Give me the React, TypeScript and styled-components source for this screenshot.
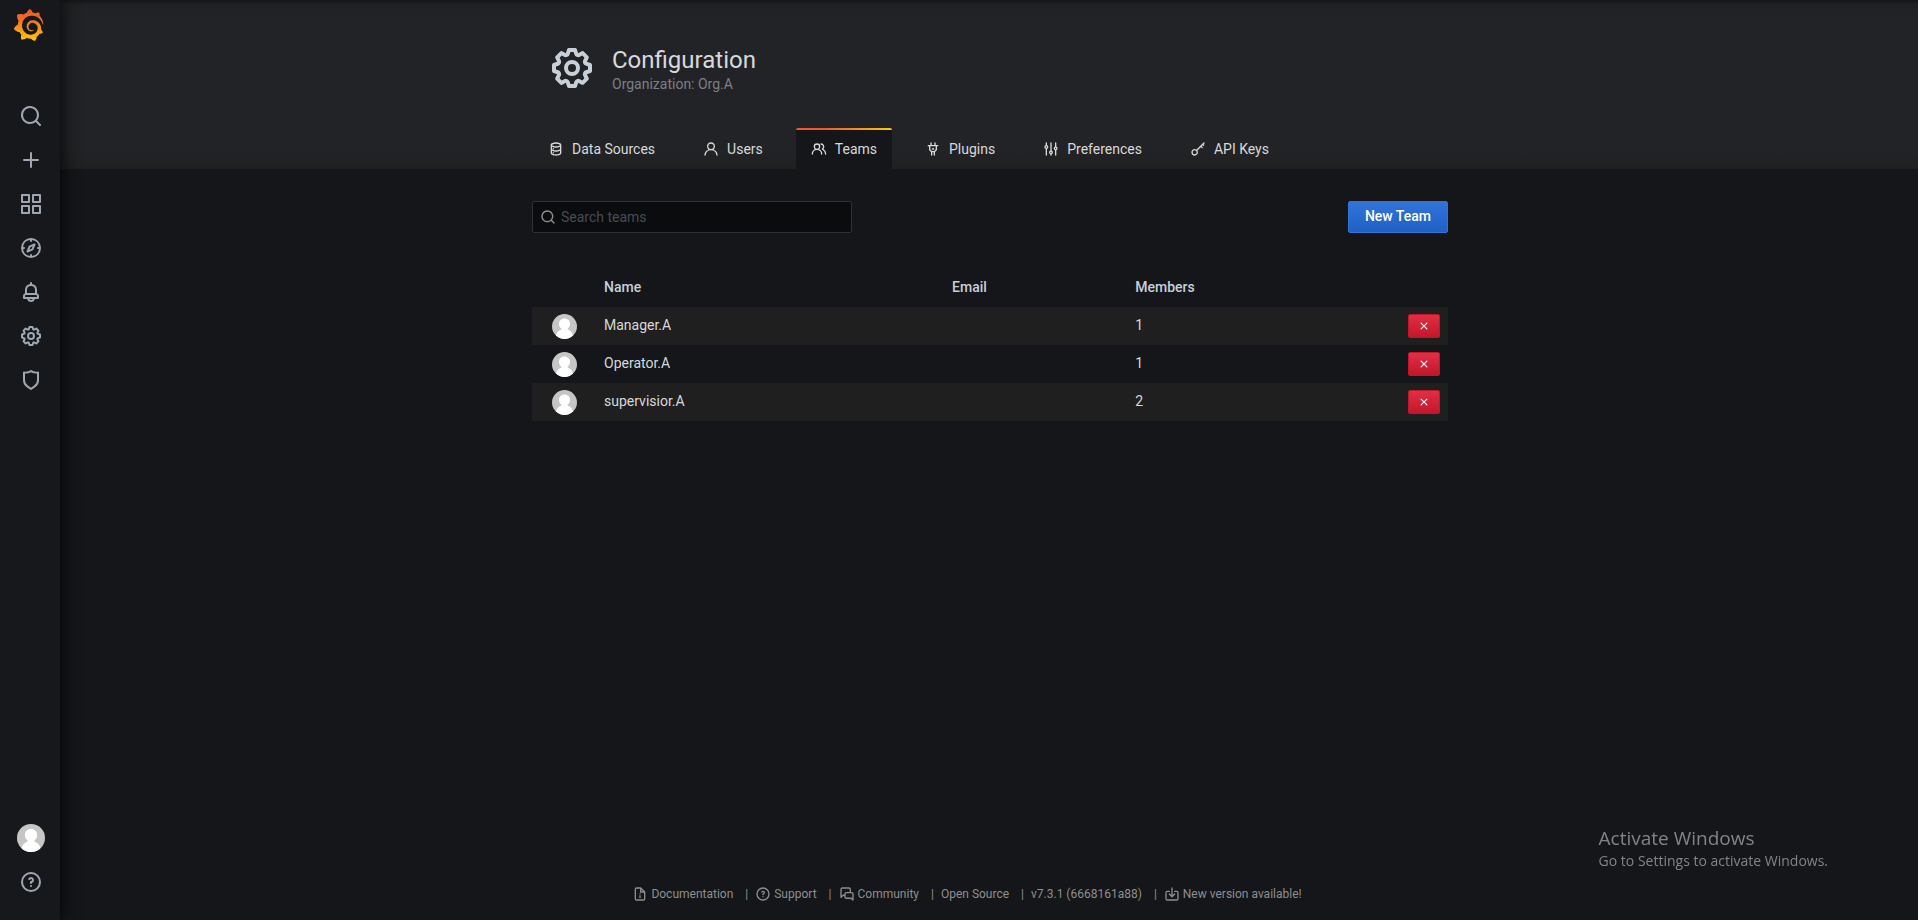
import React from 'react';
import styled, { createGlobalStyle } from 'styled-components';

const GlobalStyle = createGlobalStyle`
  *, *::before, *::after { box-sizing: border-box; }
  html, body { margin: 0; padding: 0; background: #141619; }
  body {
    color: #d8d9da;
    font-family: Roboto, "Liberation Sans", sans-serif;
    font-size: 14px;
    line-height: 20px;
  }
  a { color: inherit; text-decoration: none; }
`;

const ICONS = {
  search:
    'M21.71,20.29,18,16.61A9,9,0,1,0,16.61,18l3.68,3.68a1,1,0,0,0,1.42,0A1,1,0,0,0,21.71,20.29ZM11,18a7,7,0,1,1,7-7A7,7,0,0,1,11,18Z',
  plus: 'M19,11H13V5a1,1,0,0,0-2,0v6H5a1,1,0,0,0,0,2h6v6a1,1,0,0,0,2,0V13h6a1,1,0,0,0,0-2Z',
  apps: 'M10,13H3a1,1,0,0,0-1,1v7a1,1,0,0,0,1,1h7a1,1,0,0,0,1-1V14A1,1,0,0,0,10,13ZM9,20H4V15H9ZM21,2H14a1,1,0,0,0-1,1v7a1,1,0,0,0,1,1h7a1,1,0,0,0,1-1V3A1,1,0,0,0,21,2ZM20,9H15V4h5Zm1,4H14a1,1,0,0,0-1,1v7a1,1,0,0,0,1,1h7a1,1,0,0,0,1-1V14A1,1,0,0,0,21,13Zm-1,7H15V15h5ZM10,2H3A1,1,0,0,0,2,3v7a1,1,0,0,0,1,1h7a1,1,0,0,0,1-1V3A1,1,0,0,0,10,2ZM9,9H4V4H9Z',
  compass:
    'M12,2A10,10,0,1,0,22,12,10,10,0,0,0,12,2Zm1,17.93V19a1,1,0,0,0-2,0v.93A8,8,0,0,1,4.07,13H5a1,1,0,0,0,0-2H4.07A8,8,0,0,1,11,4.07V5a1,1,0,0,0,2,0V4.07A8,8,0,0,1,19.93,11H19a1,1,0,0,0,0,2h.93A8,8,0,0,1,13,19.93ZM15.14,7.55l-5,2.12a1,1,0,0,0-.52.52l-2.12,5a1,1,0,0,0,.21,1.1,1,1,0,0,0,.7.29.93.93,0,0,0,.4-.09l5-2.12a1,1,0,0,0,.52-.52l2.12-5a1,1,0,0,0-1.31-1.31Zm-2.49,5.1-2.28,1,1-2.28,2.28-1Z',
  bell: 'M18,13.18V10a6,6,0,0,0-5-5.91V3a1,1,0,0,0-2,0V4.09A6,6,0,0,0,6,10v3.18A3,3,0,0,0,4,16v2a1,1,0,0,0,1,1H8.14a4,4,0,0,0,7.72,0H19a1,1,0,0,0,1-1V16A3,3,0,0,0,18,13.18ZM8,10a4,4,0,0,1,8,0v3H8Zm4,10a2,2,0,0,1-1.72-1h3.44A2,2,0,0,1,12,20Zm6-3H6V16a1,1,0,0,1,1-1H17a1,1,0,0,1,1,1Z',
  cog: 'M21.32,9.55l-1.89-.63.89-1.78A1,1,0,0,0,20.13,6L18,3.87a1,1,0,0,0-1.15-.19l-1.78.89-.63-1.89A1,1,0,0,0,13.5,2h-3a1,1,0,0,0-.95.68L8.92,4.57,7.14,3.68A1,1,0,0,0,6,3.87L3.87,6a1,1,0,0,0-.19,1.15l.89,1.78-1.89.63A1,1,0,0,0,2,10.5v3a1,1,0,0,0,.68.95l1.89.63-.89,1.78A1,1,0,0,0,3.87,18L6,20.13a1,1,0,0,0,1.15.19l1.78-.89.63,1.89a1,1,0,0,0,.95.68h3a1,1,0,0,0,.95-.68l.63-1.89,1.78.89A1,1,0,0,0,18,20.13L20.13,18a1,1,0,0,0,.19-1.15l-.89-1.78,1.89-.63A1,1,0,0,0,22,13.5v-3A1,1,0,0,0,21.32,9.55ZM20,12.78l-1.2.4A2,2,0,0,0,17.64,16l.57,1.14-1.1,1.1L16,17.64a2,2,0,0,0-2.79,1.16l-.4,1.2H11.22l-.4-1.2A2,2,0,0,0,8,17.64l-1.14.57-1.1-1.1L6.36,16A2,2,0,0,0,5.2,13.18L4,12.78V11.22l1.2-.4A2,2,0,0,0,6.36,8L5.79,6.89l1.1-1.1L8,6.36A2,2,0,0,0,10.82,5.2l.4-1.2h1.56l.4,1.2A2,2,0,0,0,16,6.36l1.14-.57,1.1,1.1L17.64,8a2,2,0,0,0,1.16,2.79l1.2.4ZM12,8a4,4,0,1,0,4,4A4,4,0,0,0,12,8Zm0,6a2,2,0,1,1,2-2A2,2,0,0,1,12,14Z',
  shield:
    'M19.63,3.65a1,1,0,0,0-.84-.2,8,8,0,0,1-6.22-1.27,1,1,0,0,0-1.14,0A8,8,0,0,1,5.21,3.45a1,1,0,0,0-.84.2A1,1,0,0,0,4,4.43v7.45a9,9,0,0,0,3.77,7.33l3.65,2.6a1,1,0,0,0,1.16,0l3.65-2.6A9,9,0,0,0,20,11.88V4.43A1,1,0,0,0,19.63,3.65ZM18,11.88a7,7,0,0,1-2.93,5.7L12,19.77,8.93,17.58A7,7,0,0,1,6,11.88V5.58a10,10,0,0,0,6-1.39,10,10,0,0,0,6,1.39Z',
  question:
    'M11.29,15.29a1.58,1.58,0,0,0-.12.15.76.76,0,0,0-.09.18.64.64,0,0,0-.06.18,1.36,1.36,0,0,0,0,.2.84.84,0,0,0,.08.38.9.9,0,0,0,.54.54.94.94,0,0,0,.76,0,.9.9,0,0,0,.54-.54A1,1,0,0,0,13,16a1,1,0,0,0-.29-.71A1,1,0,0,0,11.29,15.29ZM12,2A10,10,0,1,0,22,12,10,10,0,0,0,12,2Zm0,18a8,8,0,1,1,8-8A8,8,0,0,1,12,20ZM12,7A3,3,0,0,0,9.4,8.5a1,1,0,1,0,1.73,1A1,1,0,0,1,12,9a1,1,0,0,1,0,2,1,1,0,0,0-1,1v1a1,1,0,0,0,2,0v-.18A3,3,0,0,0,12,7Z',
  database:
    'M8,16.5a1,1,0,1,0,1,1A1,1,0,0,0,8,16.5ZM12,2C8,2,4,3.37,4,6V18c0,2.63,4,4,8,4s8-1.37,8-4V6C20,3.37,16,2,12,2Zm6,16c0,.71-2.28,2-6,2s-6-1.29-6-2V14.73A13.16,13.16,0,0,0,12,16a13.16,13.16,0,0,0,6-1.27Zm0-6c0,.71-2.28,2-6,2s-6-1.29-6-2V8.73A13.16,13.16,0,0,0,12,10a13.16,13.16,0,0,0,6-1.27ZM12,8C8.28,8,6,6.71,6,6s2.28-2,6-2,6,1.29,6,2S15.72,8,12,8ZM8,10.5a1,1,0,1,0,1,1A1,1,0,0,0,8,10.5Z',
  user: 'M15.71,12.71a6,6,0,1,0-7.42,0,10,10,0,0,0-6.22,8.18,1,1,0,0,0,2,.22,8,8,0,0,1,15.9,0,1,1,0,0,0,1,.89h.11a1,1,0,0,0,.88-1.1A10,10,0,0,0,15.71,12.71ZM12,12a4,4,0,1,1,4-4A4,4,0,0,1,12,12Z',
  users:
    'M12.3,12.22A4.92,4.92,0,0,0,14,8.5a5,5,0,0,0-10,0,4.92,4.92,0,0,0,1.7,3.72A8,8,0,0,0,1,19.5a1,1,0,0,0,2,0,6,6,0,0,1,12,0,1,1,0,0,0,2,0A8,8,0,0,0,12.3,12.22ZM9,11.5a3,3,0,1,1,3-3A3,3,0,0,1,9,11.5Zm9.74.32A5,5,0,0,0,15,3.5a1,1,0,0,0,0,2,3,3,0,0,1,3,3,3,3,0,0,1-1.5,2.59,1,1,0,0,0-.5.84,1,1,0,0,0,.45.86l.39.26.13.07a7,7,0,0,1,4,6.38,1,1,0,0,0,2,0A9,9,0,0,0,18.74,11.82Z',
  plug: 'M19,6H16V3a1,1,0,0,0-2,0V6H10V3A1,1,0,0,0,8,3V6H5A1,1,0,0,0,5,8H6v5a1,1,0,0,0,.29.71L9,16.41V21a1,1,0,0,0,2,0V17h2v4a1,1,0,0,0,2,0V16.41l2.71-2.7A1,1,0,0,0,18,13V8h1a1,1,0,0,0,0-2Zm-3,6.59L13.59,15H10.41L8,12.59V8h8ZM11,13h2a1,1,0,0,0,0-2H11a1,1,0,0,0,0,2Z',
  sliders:
    'M20,8.18V3a1,1,0,0,0-2,0V8.18a3,3,0,0,0,0,5.64V21a1,1,0,0,0,2,0V13.82a3,3,0,0,0,0-5.64ZM19,12a1,1,0,1,1,1-1A1,1,0,0,1,19,12Zm-6,2.18V3a1,1,0,0,0-2,0V14.18a3,3,0,0,0,0,5.64V21a1,1,0,0,0,2,0V19.82a3,3,0,0,0,0-5.64ZM12,18a1,1,0,1,1,1-1A1,1,0,0,1,12,18ZM6,6.18V3A1,1,0,0,0,4,3V6.18a3,3,0,0,0,0,5.64V21a1,1,0,0,0,2,0V11.82A3,3,0,0,0,6,6.18ZM5,10A1,1,0,1,1,6,9,1,1,0,0,1,5,10Z',
  key: 'M21.71,2.29a1,1,0,0,0-1.42,0L9.75,12.83a5,5,0,1,0,1.42,1.42L16.2,9.22l1.4,1.4a1,1,0,0,0,1.42-1.42L17.61,7.8l1.42-1.41.7.7a1,1,0,1,0,1.41-1.41l-.7-.71,1.27-1.27A1,1,0,0,0,21.71,2.29ZM7,20a3,3,0,1,1,3-3A3,3,0,0,1,7,20Z',
  document:
    'M20,8.94a1.31,1.31,0,0,0-.06-.27l0-.09a1.07,1.07,0,0,0-.19-.28h0l-6-6h0a1.07,1.07,0,0,0-.28-.19.32.32,0,0,0-.09,0A.88.88,0,0,0,13.05,2H7A3,3,0,0,0,4,5V19a3,3,0,0,0,3,3H17a3,3,0,0,0,3-3V9S20,9,20,8.94ZM14,5.41,16.59,8H14ZM18,19a1,1,0,0,1-1,1H7a1,1,0,0,1-1-1V5A1,1,0,0,1,7,4h5V9a1,1,0,0,0,1,1h5ZM12,10.5a1,1,0,1,0,1,1A1,1,0,0,0,12,10.5Zm0,3a1,1,0,0,0-1,1v3a1,1,0,0,0,2,0v-3A1,1,0,0,0,12,13.5Z',
  comments:
    'M19,9H18V5a3,3,0,0,0-3-3H5A3,3,0,0,0,2,5V17a1,1,0,0,0,.62.92A.84.84,0,0,0,3,18a1,1,0,0,0,.71-.29l2.81-2.82H8v1.44a3,3,0,0,0,3,3h6.92l2.37,2.38A1,1,0,0,0,21,22a.84.84,0,0,0,.38-.08A1,1,0,0,0,22,21V12A3,3,0,0,0,19,9ZM8,12v.89H6.11a1,1,0,0,0-.71.29L4,14.59V5A1,1,0,0,1,5,4H15a1,1,0,0,1,1,1V9H11A3,3,0,0,0,8,12Zm12,6.59-.89-.88a1,1,0,0,0-.71-.3H11a1,1,0,0,1-1-1V12a1,1,0,0,1,1-1h8a1,1,0,0,1,1,1Z',
  import:
    'M8.71,11.29a1,1,0,0,0-1.42,1.42l4,4a1,1,0,0,0,1.42,0l4-4a1,1,0,0,0-1.42-1.42L13,13.59V3a1,1,0,0,0-2,0V13.59ZM8,7H5a3,3,0,0,0-3,3v9a3,3,0,0,0,3,3H19a3,3,0,0,0,3-3V10a3,3,0,0,0-3-3H16a1,1,0,0,0,0,2h3a1,1,0,0,1,1,1v9a1,1,0,0,1-1,1H5a1,1,0,0,1-1-1V10A1,1,0,0,1,5,9H8A1,1,0,0,0,8,7Z',
  times:
    'M13.41,12l4.3-4.29a1,1,0,1,0-1.42-1.42L12,10.59,7.71,6.29A1,1,0,0,0,6.29,7.71L10.59,12l-4.3,4.29a1,1,0,0,0,0,1.42,1,1,0,0,0,1.42,0L12,13.41l4.29,4.3a1,1,0,0,0,1.42,0,1,1,0,0,0,0-1.42Z',
};

type IconName = keyof typeof ICONS;

const IconSvg = styled.svg`
  display: block;
  flex: none;
  fill: currentColor;
`;

const Icon = ({ name, size }: { name: IconName; size: number }) => (
  <IconSvg viewBox="0 0 24 24" width={size} height={size} aria-hidden="true">
    <path d={ICONS[name]} />
  </IconSvg>
);

const LOGO_PATH =
  'M342,161.2c-0.6-6.1-1.6-13.1-3.6-20.9c-2-7.7-5-16.2-9.4-25c-4.4-8.8-10.1-17.9-17.5-26.8c-2.9-3.5-6.1-6.9-9.5-10.2c5.1-20.3-6.2-37.9-6.2-37.9c-19.5-1.2-31.9,6.1-36.5,9.4c-0.8-0.3-1.5-0.7-2.3-1c-3.3-1.3-6.7-2.6-10.3-3.7c-3.5-1.1-7.1-2.1-10.8-3c-3.7-0.9-7.4-1.6-11.2-2.2c-0.7-0.1-1.3-0.2-2-0.3c-8.5-27.2-32.9-38.6-32.9-38.6c-27.3,17.3-32.4,41.5-32.4,41.5s-0.1,0.5-0.3,1.4c-1.5,0.4-3,0.9-4.5,1.3c-2.1,0.6-4.2,1.4-6.2,2.2c-2.1,0.8-4.1,1.6-6.2,2.5c-4.1,1.8-8.2,3.8-12.2,6c-3.9,2.2-7.7,4.6-11.4,7.1c-0.5-0.2-1-0.4-1-0.4c-37.8-14.4-71.3,2.9-71.3,2.9c-3.1,40.2,15.1,65.5,18.7,70.1c-0.9,2.5-1.7,5-2.5,7.5c-2.8,9.1-4.9,18.4-6.2,28.1c-0.2,1.4-0.4,2.8-0.5,4.2C18.8,192.7,8.5,228,8.5,228c29.1,33.5,63.1,35.6,63.1,35.6c0,0,0.1-0.1,0.1-0.1c4.3,7.7,9.3,15,14.9,21.9c2.4,2.9,4.8,5.6,7.4,8.3c-10.6,30.4,1.5,55.6,1.5,55.6c32.4,1.2,53.7-14.2,58.2-17.7c3.2,1.1,6.5,2.1,9.8,2.9c10,2.6,20.2,4.1,30.4,4.5c2.5,0.1,5.1,0.2,7.6,0.1l1.2,0l0.8,0l1.6,0l1.6-0.1l0,0.1c15.3,21.8,42.1,24.9,42.1,24.9c19.1-20.1,20.2-40.1,20.2-44.4l0,0c0,0,0-0.1,0-0.3c0-0.4,0-0.6,0-0.6l0,0c0-0.3,0-0.6,0-0.9c4-2.8,7.8-5.8,11.4-9.1c7.6-6.9,14.3-14.8,19.9-23.3c0.5-0.8,1-1.6,1.5-2.4c21.6,1.2,36.9-13.4,36.9-13.4c-3.6-22.5-16.4-33.5-19.1-35.6l0,0c0,0-0.1-0.1-0.3-0.2c-0.2-0.1-0.2-0.2-0.2-0.2c0,0,0,0,0,0c-0.1-0.1-0.3-0.2-0.5-0.3c0.1-1.4,0.2-2.7,0.3-4.1c0.2-2.4,0.2-4.9,0.2-7.3l0-1.8l0-0.9l0-0.5c0-0.6,0-0.4,0-0.6l-0.1-1.5l-0.1-2c0-0.7-0.1-1.3-0.2-1.9c-0.1-0.6-0.1-1.3-0.2-1.9l-0.2-1.9l-0.3-1.9c-0.4-2.5-0.8-4.9-1.4-7.4c-2.3-9.7-6.1-18.9-11-27.2c-5-8.3-11.2-15.6-18.3-21.8c-7-6.2-14.9-11.2-23.1-14.9c-8.3-3.7-16.9-6.1-25.5-7.2c-4.3-0.6-8.6-0.8-12.9-0.7l-1.6,0l-0.4,0c-0.1,0-0.6,0-0.5,0l-0.7,0l-1.6,0.1c-0.6,0-1.2,0.1-1.7,0.1c-2.2,0.2-4.4,0.5-6.5,0.9c-8.6,1.6-16.7,4.7-23.8,9c-7.1,4.3-13.3,9.6-18.3,15.6c-5,6-8.9,12.7-11.6,19.6c-2.7,6.9-4.2,14.1-4.6,21c-0.1,1.7-0.1,3.5-0.1,5.2c0,0.4,0,0.9,0,1.3l0.1,1.4c0.1,0.8,0.1,1.7,0.2,2.5c0.3,3.5,1,6.9,1.9,10.1c1.9,6.5,4.9,12.4,8.6,17.4c3.7,5,8.2,9.1,12.9,12.4c4.7,3.2,9.8,5.5,14.8,7c5,1.5,10,2.1,14.7,2.1c0.6,0,1.2,0,1.7,0c0.3,0,0.6,0,0.9,0c0.3,0,0.6,0,0.9-0.1c0.5,0,1-0.1,1.5-0.1c0.1,0,0.3,0,0.4-0.1l0.5-0.1c0.3,0,0.6-0.1,0.9-0.1c0.6-0.1,1.1-0.2,1.7-0.3c0.6-0.1,1.1-0.2,1.6-0.4c1.1-0.2,2.1-0.6,3.1-0.9c2-0.7,4-1.5,5.7-2.4c1.8-0.9,3.4-2,5-3c0.4-0.3,0.9-0.6,1.3-1c1.6-1.3,1.9-3.7,0.6-5.3c-1.1-1.4-3.1-1.8-4.7-0.9c-0.4,0.2-0.8,0.4-1.2,0.6c-1.4,0.7-2.8,1.3-4.3,1.8c-1.5,0.5-3.1,0.9-4.7,1.2c-0.8,0.1-1.6,0.2-2.5,0.3c-0.4,0-0.8,0.1-1.3,0.1c-0.4,0-0.9,0-1.2,0c-0.4,0-0.8,0-1.2,0c-0.5,0-1,0-1.5-0.1c-0.5,0-1,0-1.5-0.1c-0.5-0.1-0.9-0.1-1.4-0.2c-3.7-0.5-7.4-1.6-10.9-3.2c-3.6-1.6-7-3.8-10.1-6.6c-3.1-2.8-5.8-6.1-7.9-9.9c-2.1-3.8-3.6-8-4.3-12.4c-0.3-2.2-0.5-4.5-0.4-6.7c0-0.6,0.1-1.2,0.1-1.8c0.1-0.5,0.1-1.1,0.1-1.6c0.1-1.2,0.3-2.4,0.5-3.6c1.7-9.6,6.5-19,13.9-26.1c1.9-1.8,3.9-3.4,6-4.9c2.1-1.5,4.4-2.8,6.8-3.9c2.4-1.1,4.8-2,7.4-2.7c2.5-0.7,5.1-1.1,7.8-1.4c1.3-0.1,2.6-0.2,4-0.2c1.4,0,2.8,0,4.2,0.1c2.9,0.2,5.7,0.6,8.5,1.3c5.6,1.2,11.1,3.3,16.2,6.1c10.2,5.7,18.9,14.5,24.2,25.1c2.7,5.3,4.6,11,5.5,16.9c0.2,1.5,0.4,3,0.5,4.5l0.1,1.1l0.1,1.1c0,0.4,0,0.8,0,1.1c0,0.4,0,0.8,0,1.1l0,1l0,1.1c0,0.7-0.1,1.9-0.1,2.6c-0.1,1.6-0.3,3.3-0.5,4.9c-0.2,1.6-0.5,3.2-0.8,4.8c-0.3,1.6-0.7,3.2-1.1,4.7c-0.8,3.1-1.8,6.2-3,9.3c-2.4,6-5.6,11.8-9.4,17.1c-7.7,10.6-18.2,19.2-30.2,24.7c-6,2.7-12.3,4.7-18.8,5.7c-3.2,0.6-6.5,0.9-9.8,1l-5,0c-1.8,0-3.5-0.1-5.3-0.3c-7-0.5-13.9-1.8-20.7-3.7c-6.7-1.9-13.2-4.6-19.4-7.8c-12.3-6.6-23.4-15.6-32-26.5c-4.3-5.4-8.1-11.3-11.2-17.4c-3.1-6.1-5.6-12.6-7.4-19.1c-1.8-6.6-2.9-13.3-3.4-20.1l-0.1-1.3l0-6c0-0.8,0-1.7,0-2.5c0.1-3.3,0.4-6.8,0.8-10.2c0.4-3.4,1-6.9,1.7-10.3c0.7-3.4,1.5-6.8,2.5-10.2c1.9-6.7,4.3-13.2,7.1-19.3c5.7-12.2,13.1-23.1,22-31.8c2.2-2.2,4.5-4.2,6.9-6.2c2.4-1.9,4.9-3.7,7.5-5.4c2.5-1.7,5.2-3.2,7.9-4.6c1.3-0.7,2.7-1.4,4.1-2c0.7-0.3,1.4-0.6,2.1-0.9c0.7-0.3,1.4-0.6,2.1-0.9c2.8-1.2,5.7-2.2,8.7-3.1c0.7-0.2,1.5-0.4,2.2-0.7c0.7-0.2,1.5-0.4,2.2-0.6c1.5-0.4,3-0.8,4.5-1.1c0.7-0.2,1.5-0.3,2.3-0.5c0.8-0.2,1.5-0.3,2.3-0.5c0.8-0.1,1.5-0.3,2.3-0.4l1.1-0.2l1.2-0.2c0.8-0.1,1.5-0.2,2.3-0.3c0.9-0.1,1.7-0.2,2.6-0.3c0.7-0.1,1.9-0.2,2.6-0.3c0.5-0.1,1.1-0.1,1.6-0.2l2.2-0.2c0.9-0.1,1.7-0.1,2.6-0.2l2.3-0.1c0.7,0,1.5-0.1,2.2-0.1c2.9-0.1,5.9-0.1,8.8,0c5.8,0.2,11.5,0.9,17,1.9c11.1,2.1,21.5,5.6,31,10.3c9.5,4.6,17.9,10.3,25.3,16.5c0.5,0.4,0.9,0.8,1.4,1.2c0.4,0.4,0.9,0.8,1.3,1.2c0.9,0.8,1.7,1.6,2.6,2.4c0.9,0.8,1.7,1.6,2.5,2.4c0.8,0.8,1.6,1.6,2.4,2.5c3.1,3.3,6,6.6,8.6,10c5.2,6.7,9.4,13.5,12.7,19.9c0.2,0.4,0.4,0.8,0.6,1.2c0.2,0.4,0.4,0.8,0.6,1.2c0.4,0.8,0.8,1.6,1.1,2.4c0.4,0.8,0.7,1.5,1.1,2.3c0.3,0.8,0.7,1.5,1,2.3c1.2,3,2.4,5.9,3.3,8.6c1.5,4.4,2.6,8.3,3.5,11.7c0.3,1.4,1.6,2.3,3,2.1c1.5-0.1,2.6-1.3,2.6-2.8C342.6,170.4,342.5,166.1,342,161.2z';

const Logo = () => (
  <IconSvg viewBox="0 0 351 365" width="31" height="32" aria-hidden="true">
    <defs>
      <linearGradient id="logo-fill" x1="0" y1="0" x2="0" y2="1">
        <stop offset="0" stopColor="#f05a28" />
        <stop offset="0.3" stopColor="#f26a25" />
        <stop offset="1" stopColor="#fbca0a" />
      </linearGradient>
    </defs>
    <path fill="url(#logo-fill)" d={LOGO_PATH} />
  </IconSvg>
);

const AvatarSvg = styled.svg`
  display: block;
  flex: none;
  border-radius: 50%;
`;

const Avatar = ({ size }: { size: number }) => (
  <AvatarSvg viewBox="0 0 28 28" width={size} height={size} role="img" aria-label="Avatar">
    <rect width="28" height="28" fill="#c6c6c6" />
    <path
      fill="#fff"
      d="M14 5C10.400 5 7.800 7.600 7.800 11C7.800 13.400 9 15.400 10.600 16.600V17.400C7 18.600 4.800 21.400 4.400 25V28H23.600V25C23.200 21.400 21 18.600 17.400 17.400V16.600C19 15.400 20.200 13.400 20.200 11C20.200 7.600 17.600 5 14 5Z"
    />
  </AvatarSvg>
);

const Shell = styled.div`
  display: flex;
  min-height: 100vh;
`;

const SideMenu = styled.nav`
  position: sticky;
  top: 0;
  z-index: 2;
  display: flex;
  flex: none;
  flex-direction: column;
  width: 60px;
  height: 100vh;
  padding-bottom: 16px;
  background: #17181c;
  box-shadow: 0 0 20px #000;
`;

const HomeLink = styled.a`
  display: block;
  height: 94px;
  padding: 9px 13px;
`;

const SideLink = styled.a`
  display: flex;
  align-items: center;
  justify-content: center;
  height: 44px;
  padding-left: 2px;
  color: #9fa7b3;
`;

const Spacer = styled.div`
  flex: 1;
`;

const Main = styled.main`
  display: flex;
  flex: 1;
  flex-direction: column;
  min-width: 0;
`;

const Container = styled.div`
  width: 100%;
  max-width: 980px;
  margin: 0 auto;
  padding: 0 31px 0 33px;
`;

const PageHeader = styled.header`
  background: linear-gradient(#141517, #202124 5px, #222326 12px, #222326 150px, #202020);
`;

const Heading = styled.div`
  display: flex;
  gap: 16px;
  height: 128px;
  padding: 44px 16px 0;
  color: #c7d0d9;
`;

const Title = styled.h1`
  margin: 0;
  color: #d8d9da;
  font-size: 24px;
  font-weight: 400;
  line-height: 32px;
`;

const Subtitle = styled.div`
  color: #7b8087;
  line-height: 16px;
`;

const Tabs = styled.nav`
  display: flex;
  gap: 18px;
  padding-left: 1px;
`;

const Tab = styled.a<{ $active?: boolean }>`
  display: flex;
  align-items: center;
  gap: 8px;
  height: 41px;
  padding: 0 15px;
  border-radius: 2px 2px 0 0;
  color: #d8d9da;
  background: ${(p) =>
    p.$active
      ? 'linear-gradient(90deg, #f05a28 30%, #fbca0a 99%) top / 100% 2px no-repeat, #141619'
      : 'none'};
`;

const ActionBar = styled.div`
  display: flex;
  align-items: center;
  justify-content: space-between;
  padding: 32px 0 36px;
`;

const SearchBox = styled.label`
  display: flex;
  align-items: center;
  gap: 5px;
  width: 320px;
  height: 32px;
  padding: 0 7px;
  border: 1px solid #2c3235;
  border-radius: 2px;
  background: #0b0c0e;
  color: #8e9196;
`;

const SearchInput = styled.input`
  flex: 1;
  min-width: 0;
  padding: 0;
  border: 0;
  outline: 0;
  background: none;
  color: #c7d0d9;
  font: inherit;
  &::placeholder {
    color: #464c54;
    opacity: 1;
  }
`;

const PrimaryButton = styled.button`
  height: 32px;
  padding: 0 16px 2px;
  border: 1px solid #3274d9;
  border-radius: 2px;
  background: linear-gradient(#3274d9, #1f60c4);
  color: #fff;
  font: 500 14px/28px Roboto, "Liberation Sans", sans-serif;
`;

const TeamsTable = styled.table`
  width: 100%;
  table-layout: fixed;
  border-collapse: collapse;
  th {
    height: 38px;
    padding: 0 10px 2px;
    color: #c7d0d9;
    font-weight: 500;
    text-align: left;
  }
  td {
    height: 38px;
    padding: 0 10px 2px;
  }
  tbody tr:nth-child(odd) {
    background: #1f1f1f;
  }
`;

const AvatarCol = styled.col`
  width: 62px;
`;
const NameCol = styled.col`
  width: 38%;
`;
const EmailCol = styled.col`
  width: 20%;
`;

const AvatarCell = styled.td`
  && {
    padding: 1px 0 0 20px;
  }
`;

const ActionCell = styled.td`
  && {
    padding: 0 8px 0 0;
  }
`;

const DeleteButton = styled.button`
  display: flex;
  align-items: center;
  justify-content: center;
  width: 32px;
  height: 24px;
  margin-left: auto;
  padding: 0;
  border: 1px solid #c4162a;
  border-radius: 2px;
  background: linear-gradient(#e02f44, #c4162a);
  color: #fff;
`;

const Footer = styled.footer`
  display: flex;
  justify-content: center;
  margin-top: auto;
  padding: 0 44px 16px 0;
  color: #8e8e8e;
  font-size: 12px;
  line-height: 20px;
`;

const FooterItem = styled.a`
  display: flex;
  align-items: center;
  gap: 3px;
  & + &::before {
    content: '|';
    padding: 0 4px 0 12px;
  }
`;

const Watermark = styled.aside`
  position: fixed;
  z-index: 3;
  right: 90px;
  bottom: 48px;
  color: #838485;
  font-family: "Open Sans", "Noto Sans", sans-serif;
  font-size: 14px;
  line-height: 22px;
  pointer-events: none;
`;

const WatermarkTitle = styled.div`
  font-size: 19px;
  line-height: 24px;
`;

const sideItems: { icon: IconName; label: string }[] = [
  { icon: 'search', label: 'Search' },
  { icon: 'plus', label: 'Create' },
  { icon: 'apps', label: 'Dashboards' },
  { icon: 'compass', label: 'Explore' },
  { icon: 'bell', label: 'Alerting' },
  { icon: 'cog', label: 'Configuration' },
  { icon: 'shield', label: 'Server Admin' },
];

const tabs: { icon: IconName; label: string }[] = [
  { icon: 'database', label: 'Data Sources' },
  { icon: 'user', label: 'Users' },
  { icon: 'users', label: 'Teams' },
  { icon: 'plug', label: 'Plugins' },
  { icon: 'sliders', label: 'Preferences' },
  { icon: 'key', label: 'API Keys' },
];

const teams = [
  { name: 'Manager.A', email: '', members: 1 },
  { name: 'Operator.A', email: '', members: 1 },
  { name: 'supervisior.A', email: '', members: 2 },
];

const footerItems: { icon?: IconName; label: string }[] = [
  { icon: 'document', label: 'Documentation' },
  { icon: 'question', label: 'Support' },
  { icon: 'comments', label: 'Community' },
  { label: 'Open Source' },
  { label: 'v7.3.1 (6668161a88)' },
  { icon: 'import', label: 'New version available!' },
];

export default function App() {
  return (
    <>
      <GlobalStyle />
      <Shell>
        <SideMenu aria-label="Main menu">
          <HomeLink href="#home" aria-label="Home">
            <Logo />
          </HomeLink>
          {sideItems.map((item) => (
            <SideLink key={item.icon} href="#menu" aria-label={item.label}>
              <Icon name={item.icon} size={24} />
            </SideLink>
          ))}
          <Spacer />
          <SideLink href="#profile" aria-label="Profile">
            <Avatar size={28} />
          </SideLink>
          <SideLink href="#help" aria-label="Help">
            <Icon name="question" size={24} />
          </SideLink>
        </SideMenu>
        <Main>
          <PageHeader>
            <Container>
              <Heading>
                <Icon name="cog" size={48} />
                <div>
                  <Title>Configuration</Title>
                  <Subtitle>Organization: Org.A</Subtitle>
                </div>
              </Heading>
              <Tabs aria-label="Configuration sections">
                {tabs.map((tab) => (
                  <Tab
                    key={tab.label}
                    href="#tab"
                    $active={tab.label === 'Teams'}
                    aria-current={tab.label === 'Teams' ? 'page' : undefined}
                  >
                    <Icon name={tab.icon} size={16} />
                    {tab.label}
                  </Tab>
                ))}
              </Tabs>
            </Container>
          </PageHeader>
          <Container>
            <ActionBar>
              <SearchBox>
                <Icon name="search" size={16} />
                <SearchInput type="text" placeholder="Search teams" aria-label="Search teams" />
              </SearchBox>
              <PrimaryButton type="button">New Team</PrimaryButton>
            </ActionBar>
            <TeamsTable>
              <colgroup>
                <AvatarCol />
                <NameCol />
                <EmailCol />
                <col />
                <AvatarCol />
              </colgroup>
              <thead>
                <tr>
                  <th />
                  <th scope="col">Name</th>
                  <th scope="col">Email</th>
                  <th scope="col">Members</th>
                  <th />
                </tr>
              </thead>
              <tbody>
                {teams.map((team) => (
                  <tr key={team.name}>
                    <AvatarCell>
                      <Avatar size={25} />
                    </AvatarCell>
                    <td>{team.name}</td>
                    <td>{team.email}</td>
                    <td>{team.members}</td>
                    <ActionCell>
                      <DeleteButton type="button" aria-label={`Delete ${team.name}`}>
                        <Icon name="times" size={14} />
                      </DeleteButton>
                    </ActionCell>
                  </tr>
                ))}
              </tbody>
            </TeamsTable>
          </Container>
          <Footer>
            {footerItems.map((item) => (
              <FooterItem key={item.label} href="#link">
                {item.icon && <Icon name={item.icon} size={16} />}
                {item.label}
              </FooterItem>
            ))}
          </Footer>
        </Main>
      </Shell>
      <Watermark>
        <WatermarkTitle>Activate Windows</WatermarkTitle>
        Go to Settings to activate Windows.
      </Watermark>
    </>
  );
}
